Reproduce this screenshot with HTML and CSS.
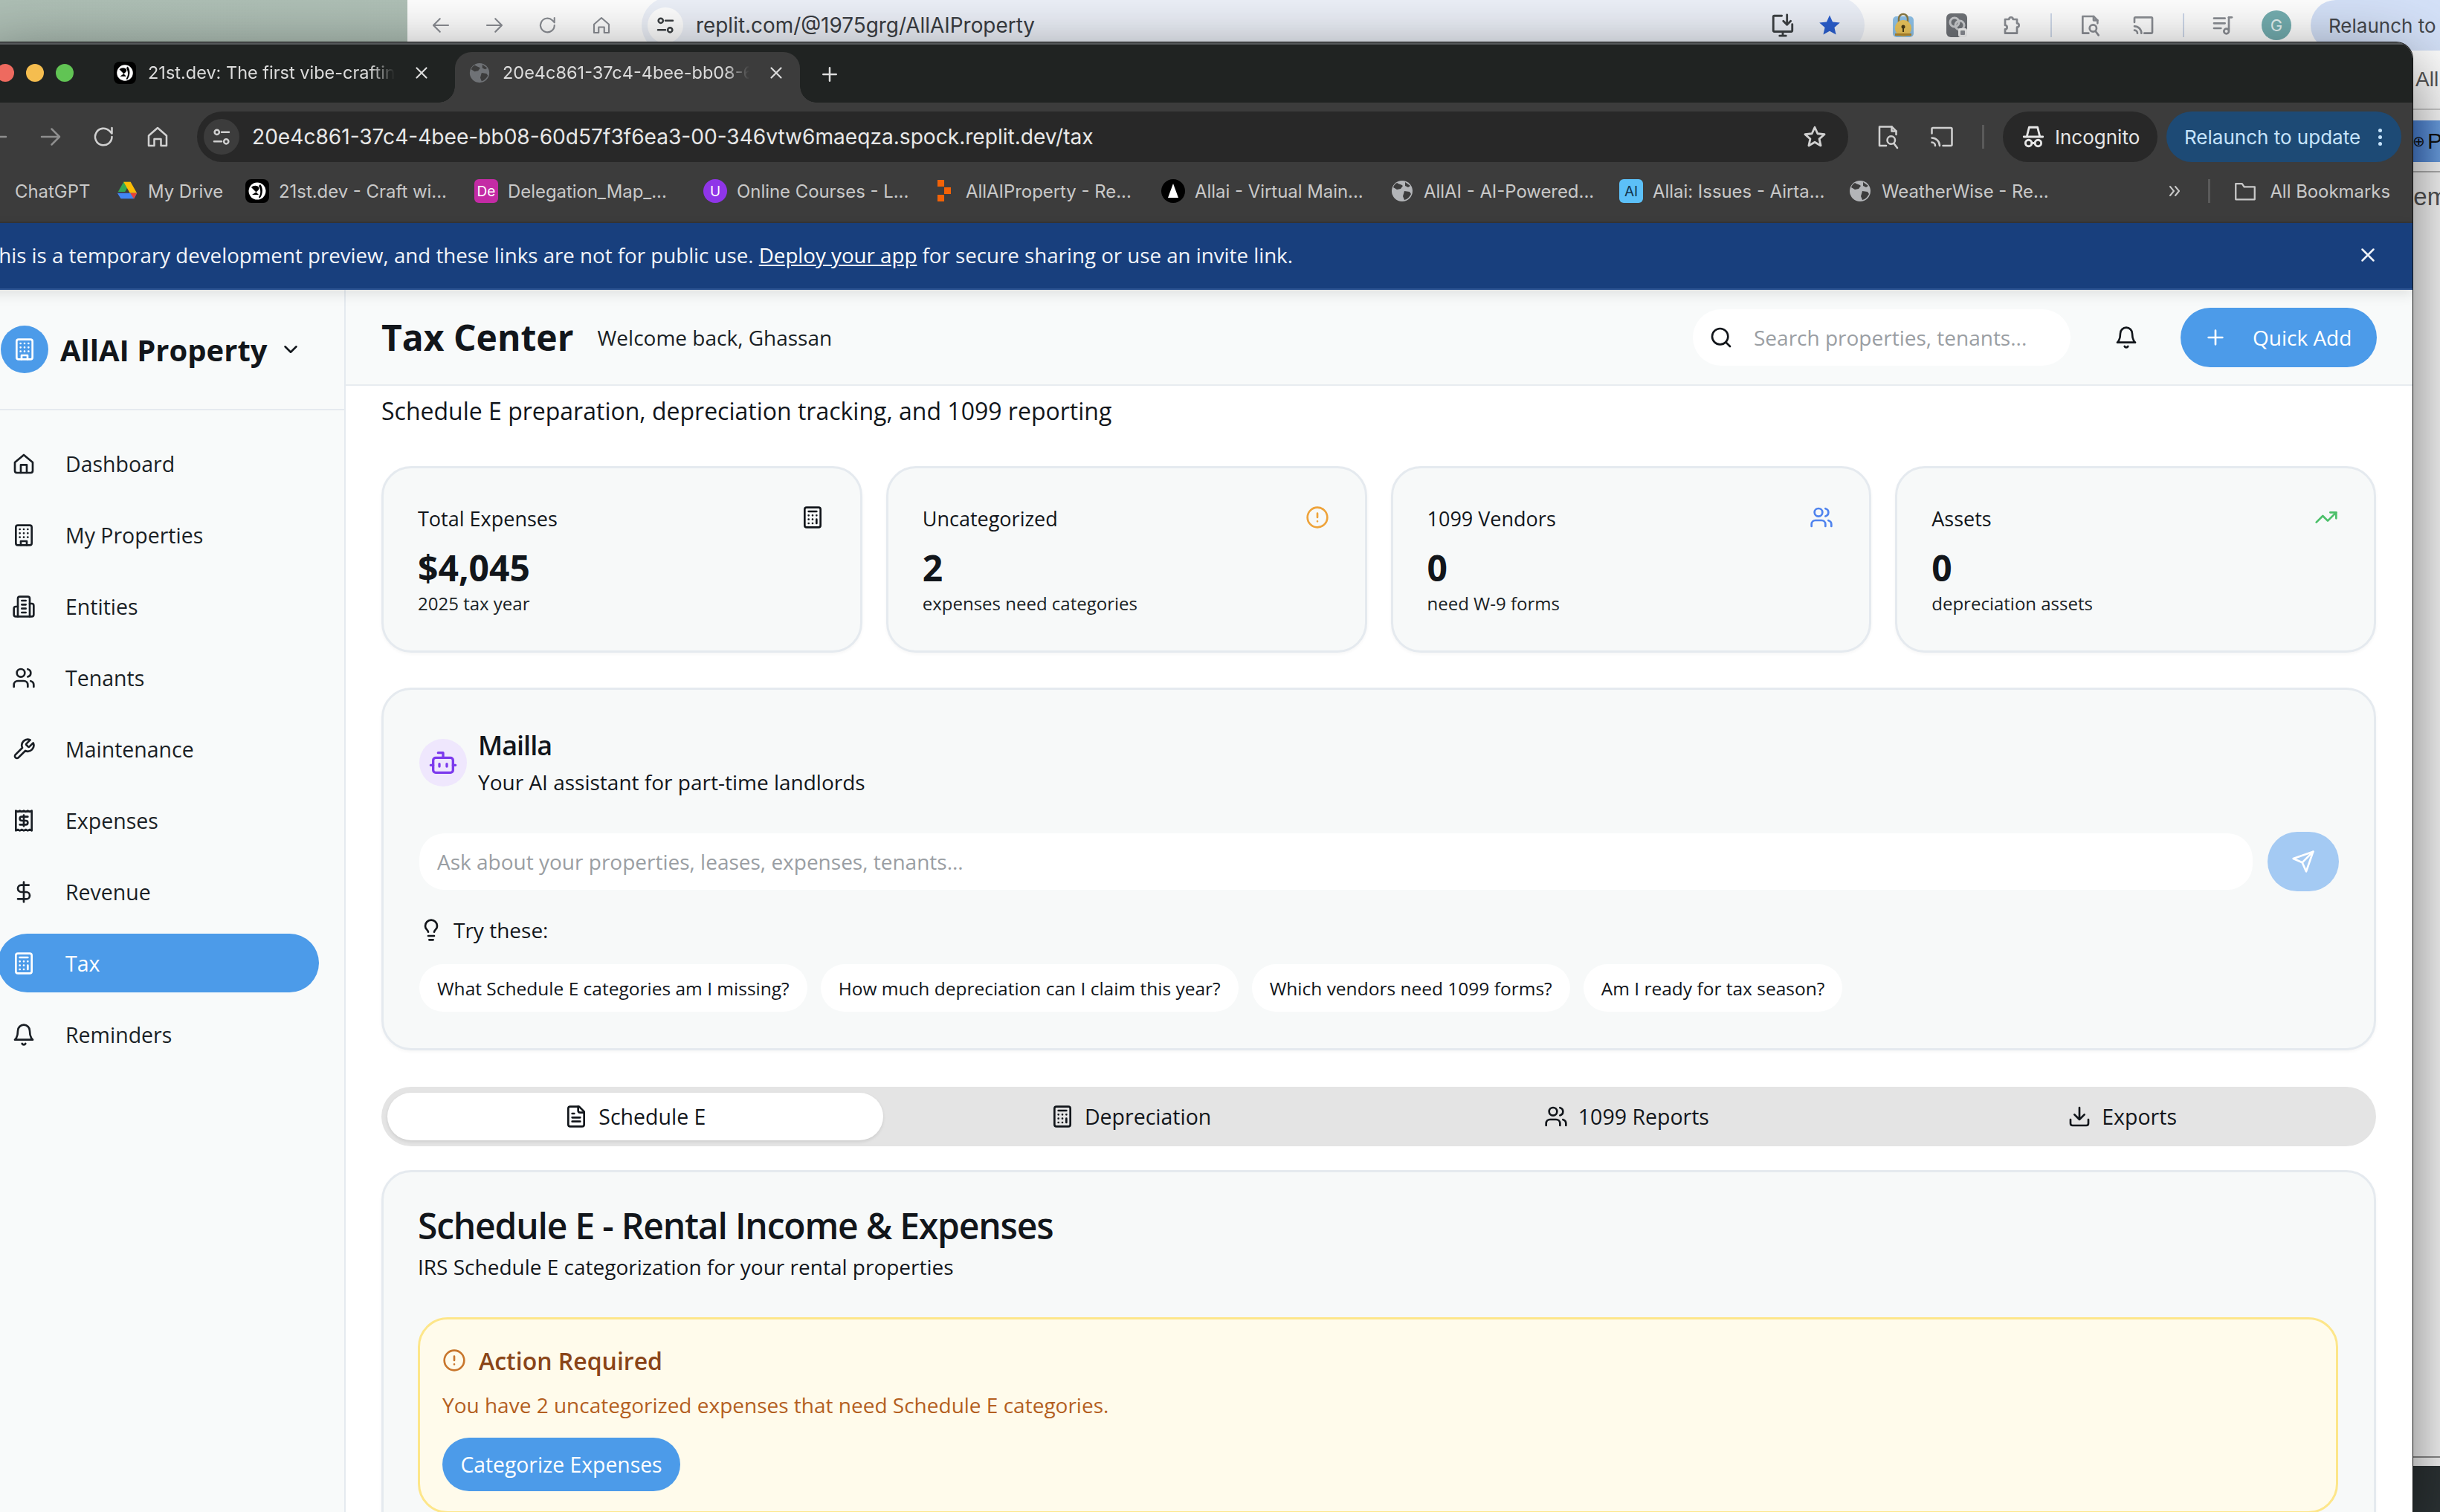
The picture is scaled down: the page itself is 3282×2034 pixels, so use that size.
FILE: index.html
```html
<!DOCTYPE html>
<html lang="en">
<head>
<meta charset="utf-8">
<title>Tax Center - AllAI Property</title>
<link rel="stylesheet" href="styles.css">
</head>
<body>
<svg class="sprite" xmlns="http://www.w3.org/2000/svg">
  <symbol id="i-home" viewBox="0 0 24 24"><path d="M3 10.5 12 3l9 7.500V19a2 2 0 0 1-2 2H5a2 2 0 0 1-2-2z"/><path d="M9 21v-8h6v8"/></symbol>
  <symbol id="i-building" viewBox="0 0 24 24"><rect width="16" height="20" x="4" y="2" rx="2"/><path d="M9 22v-4h6v4"/><path d="M8 6h.01M16 6h.01M12 6h.01M12 10h.01M12 14h.01M16 10h.01M16 14h.01M8 10h.01M8 14h.01"/></symbol>
  <symbol id="i-building2" viewBox="0 0 24 24"><path d="M6 22V4a2 2 0 0 1 2-2h8a2 2 0 0 1 2 2v18Z"/><path d="M6 12H4a2 2 0 0 0-2 2v6a2 2 0 0 0 2 2h2"/><path d="M18 9h2a2 2 0 0 1 2 2v9a2 2 0 0 1-2 2h-2"/><path d="M10 6h4M10 10h4M10 14h4M10 18h4"/></symbol>
  <symbol id="i-users" viewBox="0 0 24 24"><path d="M16 21v-2a4 4 0 0 0-4-4H6a4 4 0 0 0-4 4v2"/><circle cx="9" cy="7" r="4"/><path d="M22 21v-2a4 4 0 0 0-3-3.870"/><path d="M16 3.130a4 4 0 0 1 0 7.750"/></symbol>
  <symbol id="i-wrench" viewBox="0 0 24 24"><path d="M14.700 6.300a1 1 0 0 0 0 1.400l1.600 1.600a1 1 0 0 0 1.400 0l3.770-3.770a6 6 0 0 1-7.940 7.940l-6.910 6.910a2.120 2.120 0 0 1-3-3l6.910-6.910a6 6 0 0 1 7.940-7.940l-3.760 3.760z"/></symbol>
  <symbol id="i-receipt" viewBox="0 0 24 24"><path d="M4 2v20l2-1 2 1 2-1 2 1 2-1 2 1 2-1 2 1V2l-2 1-2-1-2 1-2-1-2 1-2-1-2 1Z"/><path d="M16 8h-6a2 2 0 1 0 0 4h4a2 2 0 1 1 0 4H8"/><path d="M12 17.500v-11"/></symbol>
  <symbol id="i-dollar" viewBox="0 0 24 24"><path d="M12 2v20"/><path d="M17 5H9.500a3.500 3.500 0 0 0 0 7h5a3.500 3.500 0 0 1 0 7H6"/></symbol>
  <symbol id="i-calc" viewBox="0 0 24 24"><rect width="16" height="20" x="4" y="2" rx="2"/><path d="M8 6h8M16 14v4"/><path d="M16 10h.01M12 10h.01M8 10h.01M12 14h.01M8 14h.01M12 18h.01M8 18h.01"/></symbol>
  <symbol id="i-bell" viewBox="0 0 24 24"><path d="M6 8a6 6 0 0 1 12 0c0 7 3 9 3 9H3s3-2 3-9"/><path d="M10.300 21a1.940 1.940 0 0 0 3.400 0"/></symbol>
  <symbol id="i-chevron" viewBox="0 0 24 24"><path d="m6 9 6 6 6-6"/></symbol>
  <symbol id="i-search" viewBox="0 0 24 24"><circle cx="11" cy="11" r="8"/><path d="m21 21-4.300-4.300"/></symbol>
  <symbol id="i-plus" viewBox="0 0 24 24"><path d="M5 12h14M12 5v14"/></symbol>
  <symbol id="i-alert" viewBox="0 0 24 24"><circle cx="12" cy="12" r="10"/><path d="M12 8v4M12 16h.01"/></symbol>
  <symbol id="i-trend" viewBox="0 0 24 24"><path d="M22 7 13.500 15.500l-5-5L2 17"/><path d="M16 7h6v6"/></symbol>
  <symbol id="i-bot" viewBox="0 0 24 24"><path d="M12 8V4H8"/><rect width="16" height="12" x="4" y="8" rx="2"/><path d="M2 14h2M20 14h2M15 13v2M9 13v2"/></symbol>
  <symbol id="i-send" viewBox="0 0 24 24"><path d="m22 2-7 20-4-9-9-4Z"/><path d="M22 2 11 13"/></symbol>
  <symbol id="i-bulb" viewBox="0 0 24 24"><path d="M15 14c.2-1 .7-1.700 1.500-2.500 1-.9 1.500-2.200 1.500-3.500A6 6 0 0 0 6 8c0 1 .2 2.200 1.500 3.500.7.7 1.300 1.500 1.500 2.500"/><path d="M9 18h6M10 22h4"/></symbol>
  <symbol id="i-file" viewBox="0 0 24 24"><path d="M15 2H6a2 2 0 0 0-2 2v16a2 2 0 0 0 2 2h12a2 2 0 0 0 2-2V7Z"/><path d="M14 2v4a2 2 0 0 0 2 2h4"/><path d="M10 9H8M16 13H8M16 17H8"/></symbol>
  <symbol id="i-download" viewBox="0 0 24 24"><path d="M21 15v4a2 2 0 0 1-2 2H5a2 2 0 0 1-2-2v-4"/><path d="m7 10 5 5 5-5M12 15V3"/></symbol>
  <symbol id="i-x" viewBox="0 0 24 24"><path d="M18 6 6 18M6 6l12 12"/></symbol>
  <symbol id="c-back" viewBox="0 0 24 24"><path d="M20 12H5M11 5l-7 7 7 7"/></symbol>
  <symbol id="c-fwd" viewBox="0 0 24 24"><path d="M4 12h15M13 5l7 7-7 7"/></symbol>
  <symbol id="c-reload" viewBox="0 0 24 24"><path d="M19 12a7.500 7.500 0 1 1-2.300-5.400L19 9V4"/></symbol>
  <symbol id="c-home" viewBox="0 0 24 24"><path d="M4 11 12 4l8 7v9h-5v-6H9v6H4z"/></symbol>
  <symbol id="c-tune" viewBox="0 0 24 24"><circle cx="7" cy="7" r="2.500"/><path d="M12 7h8M4 17h8"/><circle cx="17" cy="17" r="2.500"/></symbol>
  <symbol id="c-star" viewBox="0 0 24 24"><path d="m12 3 2.700 6 6.500.7-4.900 4.300 1.400 6.400L12 17.100 6.300 20.400l1.400-6.400L2.800 9.700 9.300 9z"/></symbol>
  <symbol id="c-reader" viewBox="0 0 24 24"><path d="M10 20H4V3h11l4 4v3"/><path d="M15 3v4h4"/><circle cx="14.500" cy="15" r="3.500"/><path d="m17 18 3 4"/></symbol>
  <symbol id="c-cast" viewBox="0 0 24 24"><path d="M3 9V5a1 1 0 0 1 1-1h16a1 1 0 0 1 1 1v14a1 1 0 0 1-1 1h-7"/><path d="M3 13a7 7 0 0 1 7 7M3 17a3 3 0 0 1 3 3"/></symbol>
  <symbol id="c-install" viewBox="0 0 24 24"><path d="M11 3H4a1 1 0 0 0-1 1v13a1 1 0 0 0 1 1h16a1 1 0 0 0 1-1v-6M9 22h6M12 18v4M16 2v9M12.500 8l3.500 3.500L19.500 8"/></symbol>
  <symbol id="c-puzzle" viewBox="0 0 24 24"><path d="M6 6h4a2 2 0 1 1 4 0h4v4a2 2 0 1 1 0 4v6H6v-4a2 2 0 1 0 0-4z"/></symbol>
  <symbol id="c-music" viewBox="0 0 24 24"><path d="M3 5h11M3 10h11M3 15h7M18 4v13"/><circle cx="15.500" cy="18" r="2.500"/><path d="M18 4h3"/></symbol>
  <symbol id="c-incognito" viewBox="0 0 24 24"><path d="M3 12h18M6 11l2-8h8l2 8"/><circle cx="7.500" cy="18" r="3"/><circle cx="16.500" cy="18" r="3"/><path d="M10.500 18h3"/></symbol>
  <symbol id="c-folder" viewBox="0 0 24 24"><path d="M3 5h6l2 3h10v12H3z"/></symbol>
  <symbol id="c-more" viewBox="0 0 24 24"><path d="m6 6 5 6-5 6M13 6l5 6-5 6"/></symbol>
  <symbol id="e-lock" viewBox="0 0 30 36"><rect x="1" y="6" width="28" height="28" rx="5" fill="#8fc3ea"/><path d="M9 14V9a6 6 0 0 1 12 0v5" fill="none" stroke="#8a7a45" stroke-width="2.500"/><circle cx="15" cy="22" r="11" fill="#ecc65c"/><circle cx="15" cy="20" r="2.500" fill="#4b3d16"/><path d="M14 21h2v6h-2z" fill="#4b3d16"/><path d="M4 29h22v3H4z" fill="#b98d2e"/></symbol>
  <symbol id="e-chain" viewBox="0 0 30 36"><rect x="1" y="2" width="28" height="32" rx="6" fill="#707378"/><circle cx="12" cy="14" r="6" fill="none" stroke="#c9cbce" stroke-width="3"/><circle cx="19" cy="18" r="6" fill="none" stroke="#c9cbce" stroke-width="3"/><rect x="17" y="22" width="12" height="12" rx="3" fill="#f4f4f4"/><rect x="20" y="25" width="6" height="6" rx="1" fill="#8b8e94"/></symbol>
  <symbol id="f-21st" viewBox="0 0 32 32"><rect width="32" height="32" rx="8" fill="#000"/><circle cx="16" cy="16" r="11.500" fill="#fff"/><path d="M8 11c3-3 8-3 10 0s-3 6-6 8l-3 2 9 0M20 7c4 4 4 14-1 19l-1-2c3-4 3-10 0-15z" fill="#000"/></symbol>
  <symbol id="f-globe" viewBox="0 0 32 32"><circle cx="16" cy="16" r="14" fill="currentColor"/><path d="M9 5c3 2 6 2 8 4l-3 4-5 1-5-3c1-3 3-5 5-6zM19 16l7 1 2 3c-2 4-5 7-9 8l-2-5zM20 4l7 5-3 2-4-2z" fill="#3c3c3c"/></symbol>
  <symbol id="f-drive" viewBox="0 0 32 28"><path d="M11 1h10l-8 14H3z" fill="#34a853"/><path d="M21 1l9 16H20L11 1z" fill="#fbbc04"/><path d="M2 17h28l-4 8H7z" fill="#4285f4"/><path d="M30 17l-4.500 8-5-8z" fill="#ea4335"/></symbol>
  <symbol id="f-replit" viewBox="0 0 20 32"><path d="M1 1h9v9H1zM10 11h9v9h-9zM1 21h9v9H1z" fill="#f26207"/></symbol>
  <symbol id="f-allai" viewBox="0 0 32 32"><circle cx="16" cy="16" r="16" fill="#000"/><path d="M16 6l7 19H9z" fill="#fff"/></symbol>
</svg>

<div class="desktop">
  <section class="back-window">
    <div class="back-toolbar">
      <svg class="ic bt-ic"><use href="#c-back"/></svg>
      <svg class="ic bt-ic"><use href="#c-fwd"/></svg>
      <svg class="ic bt-ic"><use href="#c-reload"/></svg>
      <svg class="ic bt-ic"><use href="#c-home"/></svg>
      <div class="back-omni">
        <span class="back-tune"><svg class="ic back-tune-ic"><use href="#c-tune"/></svg></span>
        <span class="back-url">replit.com/@1975grg/AllAIProperty</span>
        <svg class="ic back-install"><use href="#c-install"/></svg>
        <svg class="back-star"><use href="#c-star"/></svg>
      </div>
      <svg class="ext ext-lock"><use href="#e-lock"/></svg>
      <svg class="ext ext-gray"><use href="#e-chain"/></svg>
      <svg class="ic bt-ext"><use href="#c-puzzle"/></svg>
      <span class="back-sep"></span>
      <svg class="ic bt-ext"><use href="#c-reader"/></svg>
      <svg class="ic bt-ext"><use href="#c-cast"/></svg>
      <span class="back-sep"></span>
      <svg class="ic bt-ext"><use href="#c-music"/></svg>
      <span class="back-avatar">G</span>
      <span class="back-relaunch">Relaunch to update</span>
    </div>
    <div class="peek">
      <div class="peek-all">All</div>
      <div class="peek-blue"><span class="peek-globe">&#8853;</span>Publish</div>
      <div class="peek-text">nem</div>
      <div class="peek-line"></div>
      <div class="peek-dock"></div>
    </div>
  </section>

  <section class="window">
    <div class="tabstrip">
      <div class="lights"><span class="light red"></span><span class="light yellow"></span><span class="light green"></span></div>
      <div class="tab tab-first">
        <svg class="fav"><use href="#f-21st"/></svg>
        <span class="tab-title">21st.dev: The first vibe-crafting</span>
        <svg class="ic tab-x"><use href="#i-x"/></svg>
      </div>
      <div class="tab tab-active">
        <svg class="fav fav-globe"><use href="#f-globe"/></svg>
        <span class="tab-title">20e4c861-37c4-4bee-bb08-60d57f3f6ea3</span>
        <svg class="ic tab-x"><use href="#i-x"/></svg>
      </div>
      <svg class="ic tab-new"><use href="#i-plus"/></svg>
    </div>

    <div class="toolbar">
      <svg class="ic tb-ic dim"><use href="#c-back"/></svg>
      <svg class="ic tb-ic dim"><use href="#c-fwd"/></svg>
      <svg class="ic tb-ic"><use href="#c-reload"/></svg>
      <svg class="ic tb-ic"><use href="#c-home"/></svg>
      <div class="omni">
        <span class="omni-tune"><svg class="ic omni-tune-ic"><use href="#c-tune"/></svg></span>
        <span class="omni-url">20e4c861-37c4-4bee-bb08-60d57f3f6ea3-00-346vtw6maeqza.spock.replit.dev/tax</span>
        <svg class="ic omni-star"><use href="#c-star"/></svg>
      </div>
      <svg class="ic tb-ic"><use href="#c-reader"/></svg>
      <svg class="ic tb-ic"><use href="#c-cast"/></svg>
      <span class="tb-sep"></span>
      <div class="pill-incognito"><svg class="ic inc-ic"><use href="#c-incognito"/></svg><span>Incognito</span></div>
      <div class="pill-relaunch"><span>Relaunch to update</span><span class="dots"><i></i><i></i><i></i></span></div>
    </div>

    <div class="bookmarks">
      <div class="bm bm-first"><span>ChatGPT</span></div>
      <div class="bm bm-drive"><svg class="bm-ic"><use href="#f-drive"/></svg><span>My Drive</span></div>
      <div class="bm"><svg class="bm-ic"><use href="#f-21st"/></svg><span>21st.dev - Craft wi...</span></div>
      <div class="bm"><span class="bm-de">De</span><span>Delegation_Map_...</span></div>
      <div class="bm"><span class="bm-ud">U</span><span>Online Courses - L...</span></div>
      <div class="bm"><svg class="bm-ic"><use href="#f-replit"/></svg><span>AllAIProperty - Re...</span></div>
      <div class="bm"><svg class="bm-ic"><use href="#f-allai"/></svg><span>Allai - Virtual Main...</span></div>
      <div class="bm"><svg class="bm-ic bm-gl"><use href="#f-globe"/></svg><span>AllAI - AI-Powered...</span></div>
      <div class="bm"><span class="bm-at">AI</span><span>Allai: Issues - Airta...</span></div>
      <div class="bm"><svg class="bm-ic bm-gl"><use href="#f-globe"/></svg><span>WeatherWise - Re...</span></div>
      <div class="bm-right">
        <svg class="ic bm-more"><use href="#c-more"/></svg>
        <span class="bm-sep"></span>
        <svg class="ic bm-folder"><use href="#c-folder"/></svg>
        <span class="bm-all">All Bookmarks</span>
      </div>
    </div>

    <div class="banner">
      <span>This is a temporary development preview, and these links are not for public use. <a class="banner-link" href="#">Deploy your app</a> for secure sharing or use an invite link.</span>
      <svg class="ic banner-x"><use href="#i-x"/></svg>
    </div>

    <div class="app">
      <aside class="sidebar">
        <div class="brand">
          <span class="brand-mark"><svg class="ic brand-ic"><use href="#i-building"/></svg></span>
          <span class="brand-name">AllAI Property</span>
          <svg class="ic brand-chev"><use href="#i-chevron"/></svg>
        </div>
        <nav class="nav">
          <a class="nav-item"><svg class="ic nav-ic"><use href="#i-home"/></svg><span>Dashboard</span></a>
          <a class="nav-item"><svg class="ic nav-ic"><use href="#i-building"/></svg><span>My Properties</span></a>
          <a class="nav-item"><svg class="ic nav-ic"><use href="#i-building2"/></svg><span>Entities</span></a>
          <a class="nav-item"><svg class="ic nav-ic"><use href="#i-users"/></svg><span>Tenants</span></a>
          <a class="nav-item"><svg class="ic nav-ic"><use href="#i-wrench"/></svg><span>Maintenance</span></a>
          <a class="nav-item"><svg class="ic nav-ic"><use href="#i-receipt"/></svg><span>Expenses</span></a>
          <a class="nav-item"><svg class="ic nav-ic"><use href="#i-dollar"/></svg><span>Revenue</span></a>
          <a class="nav-item nav-active"><svg class="ic nav-ic"><use href="#i-calc"/></svg><span>Tax</span></a>
          <a class="nav-item"><svg class="ic nav-ic"><use href="#i-bell"/></svg><span>Reminders</span></a>
        </nav>
      </aside>

      <div class="main">
        <header class="topbar">
          <h1 class="page-title">Tax Center</h1>
          <span class="welcome">Welcome back, Ghassan</span>
          <div class="search"><svg class="ic search-ic"><use href="#i-search"/></svg><span>Search properties, tenants...</span></div>
          <svg class="ic top-bell"><use href="#i-bell"/></svg>
          <button class="quick-add"><svg class="ic qa-ic"><use href="#i-plus"/></svg><span>Quick Add</span></button>
        </header>

        <div class="content">
          <p class="page-sub">Schedule E preparation, depreciation tracking, and 1099 reporting</p>

          <div class="stats">
            <div class="stat">
              <div class="stat-head"><span>Total Expenses</span><svg class="ic stat-ic"><use href="#i-calc"/></svg></div>
              <div class="stat-value">$4,045</div>
              <div class="stat-sub">2025 tax year</div>
            </div>
            <div class="stat">
              <div class="stat-head"><span>Uncategorized</span><svg class="ic stat-ic tone-amber"><use href="#i-alert"/></svg></div>
              <div class="stat-value">2</div>
              <div class="stat-sub">expenses need categories</div>
            </div>
            <div class="stat">
              <div class="stat-head"><span>1099 Vendors</span><svg class="ic stat-ic tone-blue"><use href="#i-users"/></svg></div>
              <div class="stat-value">0</div>
              <div class="stat-sub">need W-9 forms</div>
            </div>
            <div class="stat">
              <div class="stat-head"><span>Assets</span><svg class="ic stat-ic tone-green"><use href="#i-trend"/></svg></div>
              <div class="stat-value">0</div>
              <div class="stat-sub">depreciation assets</div>
            </div>
          </div>

          <div class="panel assistant">
            <div class="as-head">
              <span class="as-mark"><svg class="ic as-ic"><use href="#i-bot"/></svg></span>
              <div>
                <div class="as-name">Mailla</div>
                <div class="as-sub">Your AI assistant for part-time landlords</div>
              </div>
            </div>
            <div class="as-input-row">
              <div class="as-input">Ask about your properties, leases, expenses, tenants...</div>
              <button class="as-send"><svg class="ic as-send-ic"><use href="#i-send"/></svg></button>
            </div>
            <div class="as-try"><svg class="ic as-bulb"><use href="#i-bulb"/></svg><span>Try these:</span></div>
            <div class="chips">
              <span class="chip">What Schedule E categories am I missing?</span>
              <span class="chip">How much depreciation can I claim this year?</span>
              <span class="chip">Which vendors need 1099 forms?</span>
              <span class="chip">Am I ready for tax season?</span>
            </div>
          </div>

          <div class="tabs">
            <div class="tabs-item tabs-active"><svg class="ic tabs-ic"><use href="#i-file"/></svg><span>Schedule E</span></div>
            <div class="tabs-item"><svg class="ic tabs-ic"><use href="#i-calc"/></svg><span>Depreciation</span></div>
            <div class="tabs-item"><svg class="ic tabs-ic"><use href="#i-users"/></svg><span>1099 Reports</span></div>
            <div class="tabs-item"><svg class="ic tabs-ic"><use href="#i-download"/></svg><span>Exports</span></div>
          </div>

          <div class="panel schedule">
            <h2 class="sch-title">Schedule E - Rental Income &amp; Expenses</h2>
            <p class="sch-sub">IRS Schedule E categorization for your rental properties</p>
            <div class="alert">
              <div class="alert-head"><svg class="ic alert-ic"><use href="#i-alert"/></svg><span>Action Required</span></div>
              <p class="alert-body">You have 2 uncategorized expenses that need Schedule E categories.</p>
              <button class="alert-btn">Categorize Expenses</button>
            </div>
          </div>
        </div>
      </div>
    </div>
  </section>
</div>
</body>
</html>
```

FILE: styles.css
```css
* { box-sizing: border-box; }
html, body { margin: 0; height: 100%; overflow: hidden; }
body { font-family: "Open Sans", "Liberation Sans", sans-serif; color: #12161b; }
p, h1, h2 { margin: 0; }
button { font: inherit; border: 0; }

.sprite { position: absolute; width: 0; height: 0; }
.ic { fill: none; stroke: currentColor; stroke-width: 2; stroke-linecap: round; stroke-linejoin: round; flex: none; }

.desktop { position: relative; width: 3282px; height: 2034px; overflow: hidden; background: linear-gradient(90deg, #aebfb5, #b6c7bd); }

/* window behind */
.back-window { position: absolute; left: 548px; top: 0; right: 0; bottom: 0; background: #fff; display: flex; flex-direction: column; font-family: Inter, sans-serif; }
.back-toolbar { height: 57px; flex: none; display: flex; align-items: center; padding: 11px 0 0 30px; background: #fff; color: #8b8e94; }
.bt-ic { width: 30px; height: 30px; margin-right: 42px; stroke-width: 1.700; }
.back-omni { width: 1645px; height: 76px; flex: none; margin-left: -3px; padding: 0 29px 0 8px; border-radius: 38px; background: #edf1f9; display: flex; align-items: center; }
.back-tune { width: 48px; height: 48px; border-radius: 50%; background: #fff; display: flex; align-items: center; justify-content: center; color: #3c4043; flex: none; }
.back-tune-ic { width: 30px; height: 30px; }
.back-url { margin-left: 17px; font-size: 27.900px; color: #3a3d42; white-space: nowrap; }
.back-install { width: 34px; height: 34px; margin-left: auto; color: #3c4043; }
.back-star { width: 36px; height: 36px; margin-left: 28px; fill: #2a5fd0; flex: none; }
.ext { width: 30px; height: 36px; flex: none; }
.ext-lock { margin-left: 37px; }
.ext-gray { margin-left: 42px; }
.bt-ext { width: 32px; height: 32px; margin-left: 42px; color: #8b8e94; }
.bt-ext + .bt-ext { margin-left: 39px; }
.back-sep { width: 2px; height: 32px; margin-left: 37px; background: #cfd9ea; flex: none; }
.back-sep + .bt-ext { margin-left: 36px; }
.back-avatar { width: 40px; height: 40px; margin-left: 36px; border-radius: 50%; background: #74aeb0; color: #e6f3f3; font-size: 22px; display: flex; align-items: center; justify-content: center; flex: none; }
.back-relaunch { margin-left: 26px; height: 68px; padding: 0 24px; border-radius: 34px 0 0 34px; background: #d4e1f8; color: #44474c; font-size: 26px; white-space: nowrap; display: flex; align-items: center; flex: none; }
.peek { flex: 1; min-height: 0; display: flex; flex-direction: column; padding-left: 2697px; overflow: hidden; font-family: "Liberation Sans", sans-serif; white-space: nowrap; }
.peek-all { height: 91px; padding: 34px 0 0 4px; border-bottom: 2px solid #cfcfcf; font-size: 28px; color: #555; flex: none; }
.peek-blue { height: 56px; margin-top: 14px; padding: 11px 0 0 0; background: linear-gradient(90deg, #4b83d8, #6ea3e6); color: #111; font-size: 30px; flex: none; }
.peek-globe { display: inline-block; width: 20px; font-size: 20px; vertical-align: 3px; }
.peek-text { margin-top: 12px; padding-top: 14px; border-top: 2px solid #b5b5b5; font-size: 33px; color: #555; margin-left: -17px; flex: none; }
.peek-line { margin-top: auto; height: 13px; border-top: 2px solid #8f8f8f; flex: none; }
.peek-dock { height: 62px; background: #2d3436; flex: none; }

/* front window */
.window { position: absolute; left: -32px; top: 57px; width: 3277px; height: 1990px; border-radius: 22px 22px 0 0; overflow: hidden; display: flex; flex-direction: column; background: #fff; box-shadow: 0 0 0 1px #111; z-index: 1; }
.desktop::after { content: ""; position: absolute; left: -32px; top: 87px; width: 3277px; height: 1990px; border-radius: 22px; box-shadow: 0 0 100px rgba(0, 0, 0, .6); z-index: 0; pointer-events: none; }

.tabstrip { height: 81px; flex: none; background: #202322; border-top: 3px solid #55585a; display: flex; align-items: flex-start; font-family: Inter, sans-serif; color: #dcdcdc; }
.lights { display: flex; gap: 16px; margin: 26px 0 0 27px; }
.light { width: 24px; height: 24px; border-radius: 50%; }
.red { background: #ee6a5f; }
.yellow { background: #f5bd4f; }
.green { background: #61c454; }
.tab { height: 68px; flex: none; margin-top: 10px; display: flex; align-items: flex-start; position: relative; padding-top: 12px; }
.tab-first { width: 487px; margin-left: 26px; padding-left: 28px; }
.tab-active { width: 464px; background: #3c3c3c; border-radius: 22px 22px 0 0; padding-left: 18px; }
.tab-active::before, .tab-active::after { content: ""; position: absolute; bottom: 0; width: 22px; height: 22px; }
.tab-active::before { left: -22px; background: radial-gradient(circle at 0 0, #202322 21.500px, #3c3c3c 22px); }
.tab-active::after { right: -22px; background: radial-gradient(circle at 100% 0, #202322 21.500px, #3c3c3c 22px); }
.fav { width: 30px; height: 32px; flex: none; }
.fav-globe { color: #6f7276; }
.tab-title { margin-left: 16px; width: 332px; flex: none; font-size: 23.500px; line-height: 32px; white-space: nowrap; overflow: hidden; -webkit-mask-image: linear-gradient(90deg, #000 90%, transparent); mask-image: linear-gradient(90deg, #000 90%, transparent); }
.tab-x { width: 26px; height: 26px; margin: 3px 0 0 23px; }
.tab-new { width: 30px; height: 30px; margin: 25px 0 0 25px; }

.toolbar { height: 80px; flex: none; padding: 12px 15px 0 6px; display: flex; align-items: center; gap: 28px; background: #3c3c3c; color: #d0d0d0; font-family: Inter, sans-serif; }
.tb-ic { width: 44px; height: 36px; stroke-width: 1.700; }
.dim { color: #8e8e8e; }
.omni { flex: 1; height: 68px; margin-left: 3px; margin-right: 4px; padding: 0 28px 0 9px; border-radius: 34px; background: #282828; display: flex; align-items: center; }
.omni-tune { width: 48px; height: 48px; border-radius: 50%; background: #3c3c3c; display: flex; align-items: center; justify-content: center; flex: none; }
.omni-tune-ic { width: 30px; height: 30px; }
.omni-url { margin-left: 17px; font-size: 28.100px; color: #e8e8e8; white-space: nowrap; }
.omni-star { width: 34px; height: 34px; margin-left: auto; }
.tb-sep { width: 3px; height: 32px; margin: 0 -3px 0 4px; background: #5a5a5a; flex: none; }
.pill-incognito { width: 208px; height: 68px; border-radius: 34px; background: #282828; display: flex; align-items: center; gap: 12px; padding-left: 24px; color: #e6e6e6; font-size: 26px; flex: none; }
.inc-ic { width: 34px; height: 34px; }
.pill-relaunch { width: 316px; height: 68px; margin-left: -16px; padding: 0 26px 0 24px; border-radius: 34px; background: #1d4a75; color: #c5e3fb; display: flex; align-items: center; justify-content: space-between; font-size: 26px; white-space: nowrap; flex: none; }
.dots { display: flex; flex-direction: column; gap: 4px; }
.dots i { width: 5px; height: 5px; border-radius: 50%; background: #c5e3fb; }

.bookmarks { height: 82px; flex: none; padding: 0 0 2px 0; display: flex; align-items: center; background: #3c3c3c; border-bottom: 2px solid #353535; color: #c9c9c9; font-family: Inter, sans-serif; font-size: 23.900px; }
.bm { width: 308px; flex: none; display: flex; align-items: center; gap: 13px; white-space: nowrap; }
.bm-first { width: 136px; margin-left: 52px; }
.bm-drive { width: 174px; }
.bm-drive .bm-ic { width: 30px; }
.bm-ic { width: 32px; height: 32px; flex: none; }
.bm-gl { color: #b3b5b8; }
.bm-de, .bm-at, .bm-ud { width: 32px; height: 32px; display: flex; align-items: center; justify-content: center; flex: none; color: #fff; font-size: 19px; }
.bm-de { background: #c42ba5; border-radius: 6px; }
.bm-ud { background: #8f35e8; border-radius: 50%; }
.bm-at { background: #5cc0f8; border-radius: 6px; color: #12344f; }
.bm-right { margin-left: auto; padding-right: 30px; display: flex; align-items: center; }
.bm-more { width: 24px; height: 24px; }
.bm-sep { width: 3px; height: 32px; margin: 0 30px 0 33px; background: #5a5a5a; }
.bm-folder { width: 34px; height: 34px; stroke-width: 1.600; }
.bm-all { margin-left: 16px; }

.banner { height: 90px; flex: none; padding: 0 45px 2px 15px; display: flex; align-items: center; justify-content: space-between; background: #183f7d; border-bottom: 2px solid #2e5593; color: #f2f5fa; font-size: 27.700px; position: relative; z-index: 2; box-shadow: 0 6px 16px rgba(0, 0, 0, .1); }
.banner-link { color: #fff; text-decoration: underline; }
.banner-x { width: 30px; height: 30px; }

.app { flex: 1; min-height: 0; display: flex; }
.sidebar { width: 497px; flex: none; background: #f8fafa; border-right: 2px solid #e5eaef; }
.brand { height: 162px; display: flex; align-items: center; padding: 0 0 0 33px; border-bottom: 2px solid #e5eaef; }
.brand-mark { width: 64px; height: 64px; border-radius: 50%; background: #4c9be9; display: flex; align-items: center; justify-content: center; color: #fff; flex: none; }
.brand-ic { width: 32px; height: 32px; }
.brand-name { margin-left: 16px; font-size: 40px; font-weight: 700; white-space: nowrap; color: #12161b; }
.brand-chev { width: 30px; height: 30px; margin-left: 16px; }
.nav { padding: 32px 34px 0 29px; display: flex; flex-direction: column; gap: 17px; }
.nav-item { height: 79px; display: flex; align-items: center; gap: 40px; padding-left: 19px; border-radius: 40px; font-size: 28.500px; color: #1a1f25; }
.nav-ic { width: 32px; height: 32px; }
.nav-active { background: #4c9be9; color: #fff; }

.main { flex: 1; min-width: 0; display: flex; flex-direction: column; }
.topbar { height: 129px; flex: none; display: flex; align-items: center; padding: 0 48px 0 48px; background: #f8fafa; border-bottom: 2px solid #e8ecf0; }
.page-title { font-size: 48px; font-weight: 700; white-space: nowrap; }
.welcome { margin-left: 32px; font-size: 28px; color: #1a1f25; white-space: nowrap; }
.search { width: 508px; height: 76px; margin-left: auto; border-radius: 38px; background: #fff; display: flex; align-items: center; padding-left: 22px; color: #9a9ea3; font-size: 28px; white-space: nowrap; }
.search-ic { width: 32px; height: 32px; color: #12161b; margin-right: 28px; }
.top-bell { width: 32px; height: 32px; margin: 0 57px 0 59px; }
.quick-add { width: 264px; height: 80px; border-radius: 40px; background: #4c9be9; color: #fff; display: flex; align-items: center; padding-left: 31px; font-size: 28px; }
.qa-ic { width: 32px; height: 32px; margin-right: 34px; }

.content { flex: 1; min-height: 0; padding: 12px 49px 0 48px; background: #fff; overflow: hidden; }
.page-sub { font-size: 32px; line-height: 44px; white-space: nowrap; }

.stats { margin-top: 52px; display: grid; grid-template-columns: repeat(4, 1fr); gap: 32px; }
.stat { height: 251px; padding: 47px 46px 0; border-radius: 40px; border: 3px solid #e5eaef; background: #f7f9f9; box-shadow: 0 2px 4px rgba(0, 0, 0, .04); }
.stat-head { height: 40px; display: flex; justify-content: space-between; align-items: center; font-size: 27px; }
.stat-ic { width: 32px; height: 32px; margin-right: 2px; margin-top: -2px; }
.tone-amber { color: #eea33a; }
.tone-blue { color: #4f83ee; }
.tone-green { color: #4cc06a; }
.stat-value { margin-top: 15px; height: 64px; font-size: 48px; line-height: 64px; font-weight: 700; }
.stat-sub { font-size: 24px; line-height: 32px; color: #1a1f25; }

.panel { border-radius: 40px; border: 3px solid #e5eaef; background: #f7f9f9; box-shadow: 0 2px 4px rgba(0, 0, 0, .04); }
.assistant { margin-top: 47px; height: 488px; padding: 51px 47px 0 48px; }
.as-head { display: flex; align-items: center; gap: 15px; }
.as-mark { width: 64px; height: 64px; border-radius: 50%; background: #efe7fd; display: flex; align-items: center; justify-content: center; color: #7c3aed; }
.as-ic { width: 40px; height: 40px; }
.as-name { font-size: 36px; line-height: 48px; font-weight: 600; letter-spacing: -1px; }
.as-sub { margin-top: 5px; font-size: 28px; line-height: 40px; }
.as-input-row { margin-top: 47px; display: flex; align-items: center; gap: 20px; }
.as-input { flex: 1; height: 76px; border-radius: 34px; background: #fff; padding-left: 24px; display: flex; align-items: center; font-size: 28px; color: #9a9ea3; }
.as-send { width: 96px; height: 80px; border-radius: 40px; background: #a4caf3; color: #fff; display: flex; align-items: center; justify-content: center; }
.as-send-ic { width: 32px; height: 32px; }
.as-try { margin-top: 32px; height: 40px; display: flex; align-items: center; gap: 14px; font-size: 28px; }
.as-bulb { width: 32px; height: 32px; }
.chips { margin-top: 26px; display: flex; gap: 18px; }
.chip { height: 64px; padding: 0 24px; border-radius: 32px; background: #fff; display: flex; align-items: center; font-size: 24.500px; white-space: nowrap; }

.tabs { margin-top: 49px; height: 80px; padding: 8px; border-radius: 40px; background: #e4e4e4; display: grid; grid-template-columns: repeat(4, 1fr); }
.tabs-item { border-radius: 32px; display: flex; align-items: center; justify-content: center; gap: 14px; font-size: 28.500px; }
.tabs-active { background: #fff; box-shadow: 0 2px 4px rgba(0, 0, 0, .1); }
.tabs-ic { width: 32px; height: 32px; }

.schedule { margin-top: 32px; padding: 40px 48px 0 46px; height: 600px; }
.sch-title { font-size: 48px; line-height: 64px; font-weight: 600; letter-spacing: -1.200px; white-space: nowrap; }
.sch-sub { margin-top: 3px; font-size: 28px; line-height: 40px; }
.alert { margin-top: 48px; height: 264px; padding: 33px 30px 0; border-radius: 40px; border: 3px solid #fde68a; background: #fffbeb; }
.alert-head { height: 44px; display: flex; align-items: center; gap: 17px; font-size: 32px; font-weight: 600; color: #8a4518; }
.alert-ic { width: 32px; height: 32px; color: #c8762c; }
.alert-body { margin-top: 18px; font-size: 28px; line-height: 40px; color: #b45f1f; white-space: nowrap; }
.alert-btn { margin-top: 24px; height: 72px; width: 320px; border-radius: 36px; background: #4c9be9; color: #fff; font-size: 28.300px; white-space: nowrap; padding: 0; }
```
